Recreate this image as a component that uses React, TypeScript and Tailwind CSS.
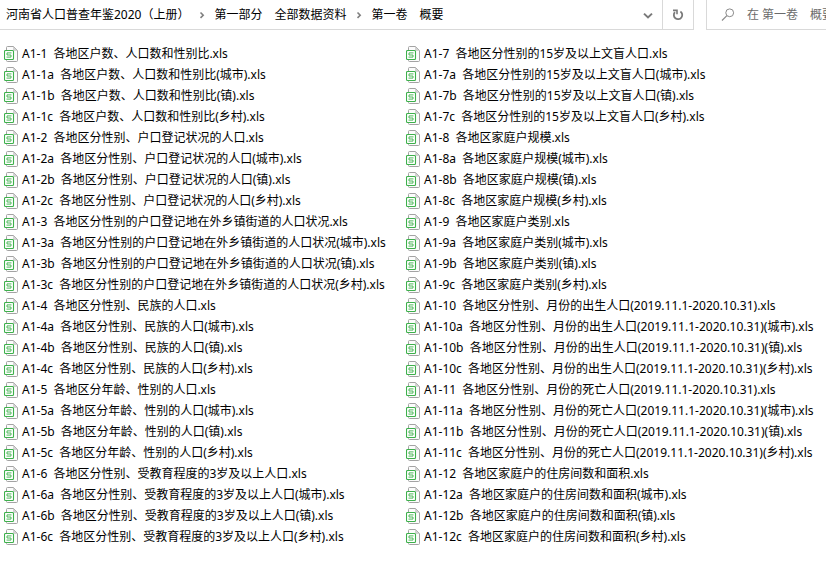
const crumbs = ["河南省人口普查年鉴2020（上册）", "第一部分　全部数据资料", "第一卷　概要"]

const leftFiles = [
  ["A1-1", "各地区户数、人口数和性别比.xls"],
  ["A1-1a", "各地区户数、人口数和性别比(城市).xls"],
  ["A1-1b", "各地区户数、人口数和性别比(镇).xls"],
  ["A1-1c", "各地区户数、人口数和性别比(乡村).xls"],
  ["A1-2", "各地区分性别、户口登记状况的人口.xls"],
  ["A1-2a", "各地区分性别、户口登记状况的人口(城市).xls"],
  ["A1-2b", "各地区分性别、户口登记状况的人口(镇).xls"],
  ["A1-2c", "各地区分性别、户口登记状况的人口(乡村).xls"],
  ["A1-3", "各地区分性别的户口登记地在外乡镇街道的人口状况.xls"],
  ["A1-3a", "各地区分性别的户口登记地在外乡镇街道的人口状况(城市).xls"],
  ["A1-3b", "各地区分性别的户口登记地在外乡镇街道的人口状况(镇).xls"],
  ["A1-3c", "各地区分性别的户口登记地在外乡镇街道的人口状况(乡村).xls"],
  ["A1-4", "各地区分性别、民族的人口.xls"],
  ["A1-4a", "各地区分性别、民族的人口(城市).xls"],
  ["A1-4b", "各地区分性别、民族的人口(镇).xls"],
  ["A1-4c", "各地区分性别、民族的人口(乡村).xls"],
  ["A1-5", "各地区分年龄、性别的人口.xls"],
  ["A1-5a", "各地区分年龄、性别的人口(城市).xls"],
  ["A1-5b", "各地区分年龄、性别的人口(镇).xls"],
  ["A1-5c", "各地区分年龄、性别的人口(乡村).xls"],
  ["A1-6", "各地区分性别、受教育程度的3岁及以上人口.xls"],
  ["A1-6a", "各地区分性别、受教育程度的3岁及以上人口(城市).xls"],
  ["A1-6b", "各地区分性别、受教育程度的3岁及以上人口(镇).xls"],
  ["A1-6c", "各地区分性别、受教育程度的3岁及以上人口(乡村).xls"],
]

const rightFiles = [
  ["A1-7", "各地区分性别的15岁及以上文盲人口.xls"],
  ["A1-7a", "各地区分性别的15岁及以上文盲人口(城市).xls"],
  ["A1-7b", "各地区分性别的15岁及以上文盲人口(镇).xls"],
  ["A1-7c", "各地区分性别的15岁及以上文盲人口(乡村).xls"],
  ["A1-8", "各地区家庭户规模.xls"],
  ["A1-8a", "各地区家庭户规模(城市).xls"],
  ["A1-8b", "各地区家庭户规模(镇).xls"],
  ["A1-8c", "各地区家庭户规模(乡村).xls"],
  ["A1-9", "各地区家庭户类别.xls"],
  ["A1-9a", "各地区家庭户类别(城市).xls"],
  ["A1-9b", "各地区家庭户类别(镇).xls"],
  ["A1-9c", "各地区家庭户类别(乡村).xls"],
  ["A1-10", "各地区分性别、月份的出生人口(2019.11.1-2020.10.31).xls"],
  ["A1-10a", "各地区分性别、月份的出生人口(2019.11.1-2020.10.31)(城市).xls"],
  ["A1-10b", "各地区分性别、月份的出生人口(2019.11.1-2020.10.31)(镇).xls"],
  ["A1-10c", "各地区分性别、月份的出生人口(2019.11.1-2020.10.31)(乡村).xls"],
  ["A1-11", "各地区分性别、月份的死亡人口(2019.11.1-2020.10.31).xls"],
  ["A1-11a", "各地区分性别、月份的死亡人口(2019.11.1-2020.10.31)(城市).xls"],
  ["A1-11b", "各地区分性别、月份的死亡人口(2019.11.1-2020.10.31)(镇).xls"],
  ["A1-11c", "各地区分性别、月份的死亡人口(2019.11.1-2020.10.31)(乡村).xls"],
  ["A1-12", "各地区家庭户的住房间数和面积.xls"],
  ["A1-12a", "各地区家庭户的住房间数和面积(城市).xls"],
  ["A1-12b", "各地区家庭户的住房间数和面积(镇).xls"],
  ["A1-12c", "各地区家庭户的住房间数和面积(乡村).xls"],
]

// Sheet of paper with the green spreadsheet badge on its left side
function SheetIcon() {
  return (
    <svg width="14" height="16" viewBox="0 0 14 16" fill="none" className="shrink-0" aria-hidden="true">
      <path
        d="M2.5 4V1.5Q2.5 .5 3.5 .5H9.5L13.5 4.5V14.5Q13.5 15.5 12.5 15.5H3.5Q2.5 15.5 2.5 14.5V13"
        fill="#fcfcfc"
        stroke="#a3a3a3"
      />
      <path d="M9.5 1V4.5H13Z" fill="#d4d4d4" stroke="#c4c4c4" strokeWidth=".6" />
      <rect x=".5" y="4.5" width="9" height="9" rx="1" fill="#fff" stroke="#3db04b" strokeWidth="1.1" />
      <path d="M7.5 6.9H3V9H7V11.1H2.5" stroke="#3db04b" strokeWidth=".9" />
    </svg>
  )
}

function CrumbArrow() {
  return (
    <svg width="12" height="12" viewBox="0 0 12 12" fill="none" className="mr-[6px] ml-[7px]" aria-hidden="true">
      <path d="M4.5 3.5L7.2 6.2L4.5 8.9" stroke="#808080" strokeWidth="1.6" />
    </svg>
  )
}

function DownIcon() {
  return (
    <svg width="12" height="12" viewBox="0 0 12 12" fill="none" aria-hidden="true">
      <path d="M2 4.6L6 8.4L10 4.6" stroke="#7a7a7a" strokeWidth="2" />
    </svg>
  )
}

function RefreshIcon() {
  return (
    <svg width="12" height="12" viewBox="0 0 12 12" fill="none" stroke="#7a7a7a" aria-hidden="true">
      <path d="M2.9 3.2A4.2 4.2 0 1 0 8.4 2.5" strokeWidth="1.8" />
      <path d="M1 1.4H5V5.2" strokeWidth="1.6" />
    </svg>
  )
}

function SearchIcon() {
  return (
    <svg width="14" height="14" viewBox="0 0 14 14" fill="none" stroke="#8a8a8a" className="shrink-0" aria-hidden="true">
      <circle cx="8.7" cy="4.8" r="3.9" />
      <path d="M5.9 7.6L1 12.5" strokeWidth="1.2" />
    </svg>
  )
}

function FileColumn({ files }: { files: string[][] }) {
  return (
    <ul>
      {files.map(([code, title]) => (
        <li key={code}>
          <a href="#" className="flex h-[21px] items-center gap-1 whitespace-nowrap">
            <SheetIcon />
            <span>
              <span className="mr-[3px]">{code}</span> {title}
            </span>
          </a>
        </li>
      ))}
    </ul>
  )
}

export default function App() {
  return (
    <div className="min-h-screen overflow-hidden bg-white font-['Noto_Sans','Noto_Sans_CJK_SC',sans-serif] text-xs text-black">
      <header className="flex h-[30px]">
        <div className="flex grow border-r border-b border-[#d9d9d9]">
          <nav aria-label="路径" className="flex grow items-center pl-[6px] whitespace-nowrap">
            {crumbs.map((crumb, index) => (
              <div key={crumb} className="flex items-center">
                {index > 0 && <CrumbArrow />}
                <a href="#">{crumb}</a>
              </div>
            ))}
          </nav>
          <button type="button" aria-label="展开" className="flex w-7 items-center justify-center">
            <DownIcon />
          </button>
          <button type="button" aria-label="刷新" className="flex w-[31px] items-center justify-center border-l border-[#d9d9d9]">
            <RefreshIcon />
          </button>
        </div>
        <label className="ml-3 flex w-[120px] shrink-0 items-center gap-3 border-b border-l border-[#d9d9d9] pl-[14px]">
          <SearchIcon />
          <input
            type="text"
            aria-label="搜索"
            placeholder="在 第一卷　概要"
            className="w-full min-w-0 outline-none placeholder:text-[#6b6b6b]"
          />
        </label>
      </header>

      <main className="grid grid-cols-[402px_1fr] pt-[13px] pb-5 pl-1">
        <FileColumn files={leftFiles} />
        <FileColumn files={rightFiles} />
      </main>
    </div>
  )
}
